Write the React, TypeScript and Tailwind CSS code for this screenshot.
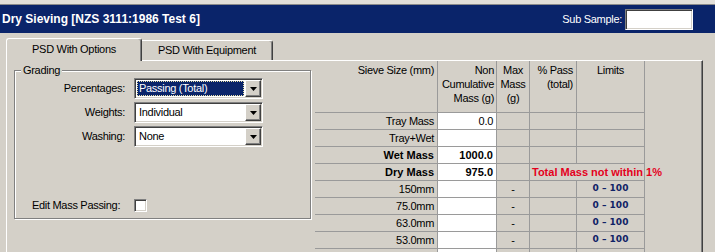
import React from 'react';

const sunken =
  'border border-t-[#808080] border-l-[#808080] border-b-white border-r-white shadow-[inset_1px_1px_0_#404040,inset_-1px_-1px_0_#d4d0c8]';
const raised =
  'border border-t-white border-l-white border-b-[#404040] border-r-[#404040] shadow-[inset_-1px_-1px_0_#808080]';

type Row = {
  label: string;
  value?: string;
  bold?: boolean;
  note?: string;
  sieve?: boolean;
};

const rows: Row[] = [
  { label: 'Tray Mass', value: '0.0' },
  { label: 'Tray+Wet' },
  { label: 'Wet Mass', value: '1000.0', bold: true },
  { label: 'Dry Mass', value: '975.0', bold: true, note: 'Total Mass not within 1%' },
  { label: '150mm', sieve: true },
  { label: '75.0mm', sieve: true },
  { label: '63.0mm', sieve: true },
  { label: '53.0mm', sieve: true },
];

const Dropdown: React.FC<{ value: string; focused?: boolean }> = ({ value, focused }) => (
  <div className={`w-[129px] h-[21px] p-[1px] flex bg-white ${sunken}`}>
    <div className="flex-1 flex p-[1px] min-w-0">
      <div
        className={`flex-1 flex items-center pl-[1px] whitespace-nowrap border ${
          focused ? 'bg-[#0a246a] text-white border-dotted border-[#e8e0a8]' : 'border-transparent'
        }`}
      >
        {value}
      </div>
    </div>
    <div className={`w-[16px] bg-[#d4d0c8] flex items-center justify-center ${raised}`}>
      <svg width="7" height="4" viewBox="0 0 7 4">
        <path d="M0 0h7L3.5 4z" fill="#000" />
      </svg>
    </div>
  </div>
);

const cell = 'h-[17px] border-r border-b border-[#9a9a9a] flex items-center';

export default function App() {
  return (
    <div className="w-[715px] h-[252px] overflow-hidden bg-[#d4d0c8] font-['Liberation_Sans',Arial,sans-serif] text-[11px] tracking-[-0.3px] text-black">
      <div className="h-[4px] bg-[#e2dfd9]" />
      <div className="h-[1px] bg-[#8a8a8a]" />

      {/* title bar */}
      <div className="h-[28px] bg-[#0a246a] flex items-center justify-between pl-[2px] pr-[22px] text-white">
        <span className="text-[12px] font-bold tracking-normal">Dry Sieving [NZS 3111:1986 Test 6]</span>
        <div className="flex items-center gap-[3px]">
          <span>Sub Sample:</span>
          <div className={`w-[68px] h-[21px] bg-white ${sunken}`} />
        </div>
      </div>

      <div className="px-[6px] pt-[5px]">
        {/* tabs */}
        <div className="flex items-end h-[22px]">
          <div className="relative z-10 w-[136px] h-[23px] -mb-[1px] bg-[#d4d0c8] border-l border-t border-r border-l-white border-t-white border-r-[#404040] rounded-t-[3px] shadow-[inset_-1px_0_0_#808080] flex items-center justify-center pb-[2px]">
            PSD With Options
          </div>
          <div className="w-[131px] h-[20px] border-t border-r border-t-white border-r-[#404040] rounded-tr-[3px] shadow-[inset_-1px_0_0_#808080] flex items-center justify-center pb-[1px]">
            PSD With Equipment
          </div>
        </div>

        {/* tab page */}
        <div className="w-[697px] h-[192px] flex border-l border-t border-r border-l-white border-t-white border-r-[#404040] shadow-[inset_-1px_0_0_#808080]">
          <div className="w-[308px] shrink-0 pl-[7px] pt-[2px]">
            <fieldset className="w-[297px] h-[156px] border border-[#808080] shadow-[inset_1px_1px_0_#fff,1px_1px_0_#fff]">
              <legend className="ml-[6px] px-[2px] leading-[14px] bg-[#d4d0c8]">Grading</legend>
              <div className="flex flex-col gap-[3px] mt-[1px]">
                {[
                  { label: 'Percentages:', value: 'Passing (Total)', focused: true },
                  { label: 'Weights:', value: 'Individual' },
                  { label: 'Washing:', value: 'None' },
                ].map(r => (
                  <div key={r.label} className="flex items-center gap-[9px]">
                    <span className="w-[110px] text-right">{r.label}</span>
                    <Dropdown value={r.value} focused={r.focused} />
                  </div>
                ))}
              </div>
              <div className="flex items-center mt-[50px]">
                <span className="w-[119px] pl-[17px]">Edit Mass Passing:</span>
                <div className={`w-[13px] h-[13px] bg-white ${sunken}`} />
              </div>
            </fieldset>
          </div>

          {/* sieve grid */}
          <div className="w-[330px] shrink-0 grid grid-cols-[123px_59px_33px_47px_68px] content-start">
            <div className="h-[52px] border-r border-b border-[#9a9a9a] leading-[14px] pt-[2px] pr-[3px] text-right">Sieve Size (mm)</div>
            <div className="h-[52px] border-r border-b border-[#9a9a9a] leading-[14px] pt-[2px] pr-[2px] text-right">
              Non
              <br />
              Cumulative
              <br />
              Mass (g)
            </div>
            <div className="h-[52px] border-r border-b border-[#9a9a9a] leading-[14px] pt-[2px] text-center">
              Max
              <br />
              Mass
              <br />
              (g)
            </div>
            <div className="h-[52px] border-r border-b border-[#9a9a9a] leading-[14px] pt-[2px] pr-[3px] text-right">
              % Pass
              <br />
              (total)
            </div>
            <div className="h-[52px] border-r border-b border-[#9a9a9a] leading-[14px] pt-[2px] text-center">Limits</div>

            {rows.map(r => (
              <React.Fragment key={r.label}>
                <div className={`${cell} justify-end pr-[3px] ${r.bold ? 'font-bold tracking-normal' : ''}`}>{r.label}</div>
                <div className={`${cell} justify-end pr-[3px] bg-white ${r.bold ? 'font-bold tracking-normal' : ''}`}>{r.value}</div>
                <div className={`${cell} justify-center`}>{r.sieve ? '-' : ''}</div>
                {r.note ? (
                  <div className={`${cell} col-span-2 pl-[2px] whitespace-nowrap overflow-visible font-bold tracking-normal text-[#e4001c]`}>
                    {r.note}
                  </div>
                ) : (
                  <>
                    <div className={cell} />
                    <div className={`${cell} justify-center font-['DejaVu_Sans',Verdana,sans-serif] font-bold text-[9px] tracking-normal text-[#0f2266]`}>
                      {r.sieve ? '0 – 100' : ''}
                    </div>
                  </>
                )}
              </React.Fragment>
            ))}
            {/* next sieve row, cut off by the window edge */}
            <div className={cell} />
            <div className={`${cell} bg-white`} />
            <div className={cell} />
            <div className={cell} />
            <div className={cell} />
          </div>
        </div>
      </div>
    </div>
  );
}
